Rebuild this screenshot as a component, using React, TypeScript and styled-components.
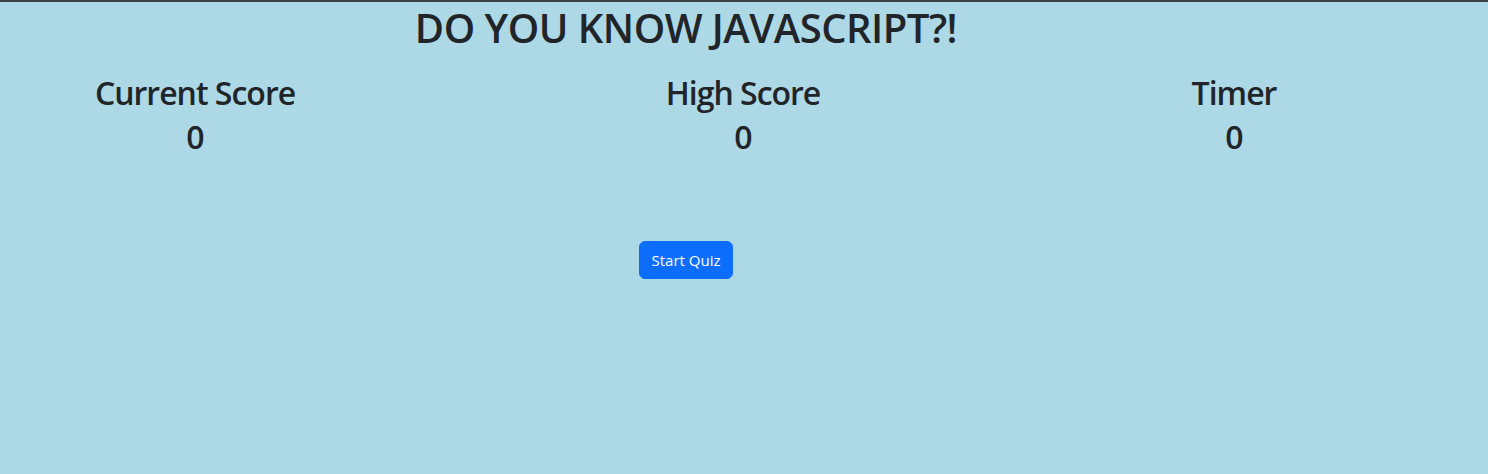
import styled, { createGlobalStyle } from "styled-components";

const GlobalStyle = createGlobalStyle`
  html, body {
    margin: 0;
    padding: 0;
  }
  body {
    background-color: #add8e6;
    color: #212529;
    font-family: "Open Sans", "Noto Sans", "Liberation Sans", sans-serif;
    min-height: 100vh;
    border-top: 2px solid #3b4045;
    box-sizing: border-box;
  }
`;

const Page = styled.main`
  width: 1372px;
  display: flex;
  flex-direction: column;
  align-items: center;
`;

const Title = styled.h1`
  margin: 2px 0 8px;
  font-size: 40px;
  font-weight: 600;
  line-height: 1.2;
  letter-spacing: -0.5px;
`;

const ScoreRow = styled.section`
  align-self: stretch;
  display: flex;
  justify-content: space-between;
  padding: 0 96px;
  margin-top: 14px;
`;

const ScoreBlock = styled.div<{ $w: number }>`
  width: ${(p) => p.$w}px;
  display: flex;
  flex-direction: column;
  align-items: center;
  white-space: nowrap;
`;

const Label = styled.h2`
  margin: 0 0 6px;
  font-size: 32px;
  font-weight: 600;
  line-height: 1.2;
  letter-spacing: -1px;
`;

const Value = styled(Label)``;

const StartButton = styled.button`
  margin-top: 78px;
  padding: 6px 12px;
  font-family: inherit;
  font-size: 15px;
  line-height: 24px;
  color: #fff;
  background-color: #0d6efd;
  border: 1px solid #0d6efd;
  border-radius: 6px;
  cursor: pointer;
`;

const scores = [
  { label: "Current Score", value: 0, w: 198 },
  { label: "High Score", value: 0, w: 158 },
  { label: "Timer", value: 0, w: 84 },
];

export default function App() {
  return (
    <>
      <GlobalStyle />
      <Page>
        <Title>DO YOU KNOW JAVASCRIPT?!</Title>
        <ScoreRow>
          {scores.map((s) => (
            <ScoreBlock key={s.label} $w={s.w}>
              <Label>{s.label}</Label>
              <Value as="h2">{s.value}</Value>
            </ScoreBlock>
          ))}
        </ScoreRow>
        <StartButton>Start Quiz</StartButton>
      </Page>
    </>
  );
}
